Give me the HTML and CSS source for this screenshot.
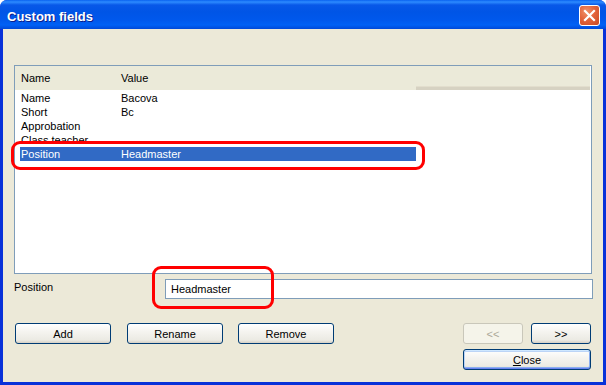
FILE: index.html
```html
<!DOCTYPE html>
<html>
<head>
    <title>Custom fields</title>
    <link rel="stylesheet" href="styles.css">
</head>
<body>
    <div class="window">
        <div class="titlebar">
            <span class="title">Custom fields</span>
            <button class="close-x" aria-label="Close">
                <svg width="13" height="13" viewBox="0 0 13 13">
                    <path d="M2 2 L11 11 M11 2 L2 11" stroke="#fff" stroke-width="2.2" stroke-linecap="square"/>
                </svg>
            </button>
        </div>

        <div class="content">
            <div class="listbox">
                <div class="list-header">
                    <div class="col col-name">Name</div>
                    <div class="col col-value">Value</div>
                    <div class="col col-rest"></div>
                </div>
                <div class="rows">
                    <div class="row"><span class="cell-name">Name</span><span class="cell-value">Bacova</span></div>
                    <div class="row"><span class="cell-name">Short</span><span class="cell-value">Bc</span></div>
                    <div class="row"><span class="cell-name">Approbation</span><span class="cell-value"></span></div>
                    <div class="row"><span class="cell-name">Class teacher ...</span><span class="cell-value"></span></div>
                    <div class="row selected"><span class="cell-name">Position</span><span class="cell-value">Headmaster</span></div>
                </div>
            </div>

            <div class="field-row">
                <label class="field-label">Position</label>
                <input class="field-input" type="text" value="Headmaster">
            </div>

            <div class="button-row">
                <div class="left-buttons">
                    <button class="btn">Add</button>
                    <button class="btn">Rename</button>
                    <button class="btn btn-remove">Remove</button>
                </div>
                <div class="right-buttons">
                    <div class="nav-buttons">
                        <button class="btn btn-small" disabled>&lt;&lt;</button>
                        <button class="btn btn-small">&gt;&gt;</button>
                    </div>
                    <button class="btn btn-close"><u>C</u>lose</button>
                </div>
            </div>
        </div>

        <div class="mark mark-row"></div>
        <div class="mark mark-input"></div>
    </div>
</body>
</html>
```

FILE: styles.css
```css
body {
    margin: 0;
    background: #fff;
    font-family: "Liberation Sans", Arial, sans-serif;
    font-size: 11px;
    color: #000;
}
.window {
    position: relative;
    width: 606px;
    height: 385px;
    display: flex;
    flex-direction: column;
    background: #0831d9;
    border-radius: 7px 7px 0 0;
    overflow: hidden;
}
.titlebar {
    height: 29px;
    display: flex;
    align-items: center;
    justify-content: space-between;
    padding: 0 6px 0 7px;
    background: linear-gradient(#0a62f0 0, #2d8bff 2px, #0858e8 5px, #0055e6 12px, #0058ec 20px, #0061f5 25px, #0049d8 29px);
    box-sizing: border-box;
}
.title {
    color: #fff;
    font-weight: bold;
    font-size: 13px;
    text-shadow: 1px 1px 0 #0b1e8a;
    padding-top: 3px;
}
.close-x {
    width: 21px;
    height: 21px;
    padding: 0;
    margin-top: 1px;
    border: 1px solid #fff;
    border-radius: 3px;
    background: radial-gradient(circle at 35% 30%, #f0926a 0, #e3643c 45%, #c94a22 100%);
    display: flex;
    align-items: center;
    justify-content: center;
}
.content {
    flex: 1;
    margin: 0 3px 3px 3px;
    background: #ece9d8;
    padding: 36px 11px 0 11px;
    display: flex;
    flex-direction: column;
}
.listbox {
    height: 209px;
    box-sizing: border-box;
    border: 1px solid #7f9db9;
    background: #fff;
}
.list-header {
    display: flex;
    height: 24px;
    margin-bottom: 1px;
}
.col {
    background: #ebead9;
    display: flex;
    align-items: center;
    box-sizing: border-box;
}
.col-name {
    width: 106px;
    padding-left: 6px;
}
.col-value {
    width: 295px;
}
.col-rest {
    flex: 1;
    margin-right: 1px;
    border-bottom: 3px solid #d6d2c2;
    box-shadow: inset 0 -1px 0 #e2decd;
}
.rows {
    padding-left: 5px;
}
.row {
    display: flex;
    width: 396px;
    height: 14px;
    line-height: 14px;
    white-space: nowrap;
}
.cell-name {
    flex: 0 0 101px;
    padding-left: 1px;
    box-sizing: border-box;
}
.row.selected {
    background: #316ac5;
    color: #fff;
}
.field-row {
    display: flex;
    align-items: center;
    margin-top: 5px;
}
.field-label {
    width: 151px;
    margin-top: -5px;
}
.field-input {
    flex: 1;
    height: 20px;
    box-sizing: border-box;
    border: 1px solid #7f9db9;
    padding: 0 5px;
    font-family: inherit;
    font-size: 11px;
    margin-right: -1px;
}
.button-row {
    display: flex;
    justify-content: space-between;
    margin-top: 24px;
}
.left-buttons {
    display: flex;
    gap: 16px;
    margin-left: 1px;
}
.btn-remove {
    margin-left: -1px;
}
.right-buttons {
    display: flex;
    flex-direction: column;
    gap: 5px;
    margin-right: 1px;
}
.nav-buttons {
    display: flex;
    gap: 8px;
}
.btn {
    width: 96px;
    height: 21px;
    border: 1px solid #003c74;
    border-radius: 3px;
    background: linear-gradient(#ffffff 0, #f5f4f0 40%, #ebeae3 85%, #d6d0c5 100%);
    font-family: inherit;
    font-size: 11px;
    color: #000;
    padding: 0;
}
.btn-small {
    width: 60px;
}
.btn:disabled {
    border-color: #c9c7ba;
    background: #f5f4ea;
    color: #aca899;
}
.btn-close {
    width: 128px;
    height: 21px;
    box-shadow: inset 0 1px 0 #cee7ff, inset 0 -1px 0 #6982ee, inset 1px 0 0 #bcd4f6, inset -1px 0 0 #89adf0, inset 0 2px 0 #bcd4f6, inset 0 -2px 0 #89adf0;
}
.mark {
    position: absolute;
    border: 3px solid #ff0000;
    border-radius: 9px;
    box-sizing: border-box;
}
.mark-row {
    left: 11px;
    top: 141px;
    width: 414px;
    height: 29px;
}
.mark-input {
    left: 152px;
    top: 266px;
    width: 122px;
    height: 43px;
}
```
